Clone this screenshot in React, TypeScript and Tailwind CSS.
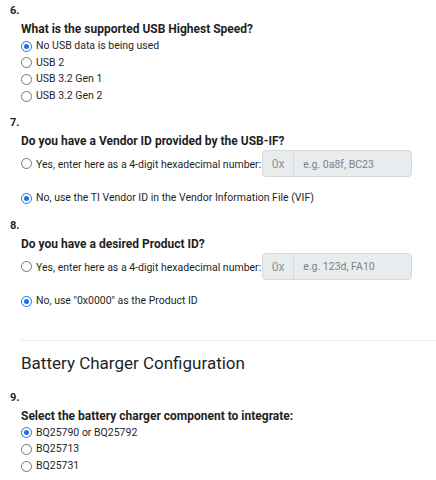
import React from 'react'

type Option = { label: string; checked?: boolean }

function Radio({ checked }: { checked?: boolean }) {
  return checked ? (
    <span className="flex h-[11px] w-[11px] shrink-0 items-center justify-center rounded-full border-[1.5px] border-[#1a73e8] bg-white">
      <span className="h-[5px] w-[5px] rounded-full bg-[#1a73e8]" />
    </span>
  ) : (
    <span className="h-[11px] w-[11px] shrink-0 rounded-full border border-[#767676] bg-white" />
  )
}

function OptionRow({ label, checked }: Option) {
  return (
    <div className="flex h-[16.6px] items-center gap-[4px] text-[10.5px] leading-[16.6px] text-[#1f1f1f]">
      <Radio checked={checked} />
      <span className="whitespace-nowrap">{label}</span>
    </div>
  )
}

function HexRow({ label, placeholder }: { label: string; placeholder: string }) {
  return (
    <div className="mb-[13px] flex h-[27px] items-center text-[10.5px] text-[#1f1f1f]">
      <Radio />
      <span className="ml-[4px] mt-[2px] whitespace-nowrap">{label}</span>
      <div className="ml-[1px] flex h-[27px] w-[150px] shrink-0 overflow-hidden rounded-[4px] border border-[#d6d9dc] bg-[#e9ecef]">
        <span className="flex w-[31px] items-center justify-center border-r border-[#d6d9dc] pt-[1px] text-[12px] text-[#8e9398]">
          0x
        </span>
        <span className="flex items-center pl-[9px] pt-[1px] text-[10.5px] text-[#7d8287]">{placeholder}</span>
      </div>
    </div>
  )
}

function Question({
  num,
  title,
  children,
}: {
  num: number
  title: string
  children: React.ReactNode
}) {
  return (
    <div className="mb-[10px]">
      <div className="pl-[10px] text-[11px] font-bold leading-[18px] text-[#1f1f1f]">{num}.</div>
      <div className="pl-[21px]">
        <div className="whitespace-nowrap text-[12px] font-bold leading-[18px] text-[#1f1f1f]">{title}</div>
        {children}
      </div>
    </div>
  )
}

export default function App() {
  return (
    <div
      className="h-[480px] w-[436px] overflow-hidden bg-white pt-[2px]"
      style={{ fontFamily: 'Roboto, "Noto Sans", sans-serif' }}
    >
      <Question num={6} title="What is the supported USB Highest Speed?">
        <OptionRow label="No USB data is being used" checked />
        <OptionRow label="USB 2" />
        <OptionRow label="USB 3.2 Gen 1" />
        <OptionRow label="USB 3.2 Gen 2" />
      </Question>

      <Question num={7} title="Do you have a Vendor ID provided by the USB-IF?">
        <HexRow label="Yes, enter here as a 4-digit hexadecimal number:" placeholder="e.g. 0a8f, BC23" />
        <OptionRow label="No, use the TI Vendor ID in the Vendor Information File (VIF)" checked />
      </Question>

      <Question num={8} title="Do you have a desired Product ID?">
        <HexRow label="Yes, enter here as a 4-digit hexadecimal number:" placeholder="e.g. 123d, FA10" />
        <OptionRow label={'No, use "0x0000" as the Product ID'} checked />
      </Question>

      {/* Section header */}
      <div className="ml-[21px] mt-[30px] border-t border-[#ebebeb]">
        <h2 className="pt-[10px] text-[17px] font-normal leading-[25px] text-[#1f1f1f]">
          Battery Charger Configuration
        </h2>
      </div>

      <div className="mt-[13px]">
        <Question num={9} title="Select the battery charger component to integrate:">
          <OptionRow label="BQ25790 or BQ25792" checked />
          <OptionRow label="BQ25713" />
          <OptionRow label="BQ25731" />
        </Question>
      </div>
    </div>
  )
}
